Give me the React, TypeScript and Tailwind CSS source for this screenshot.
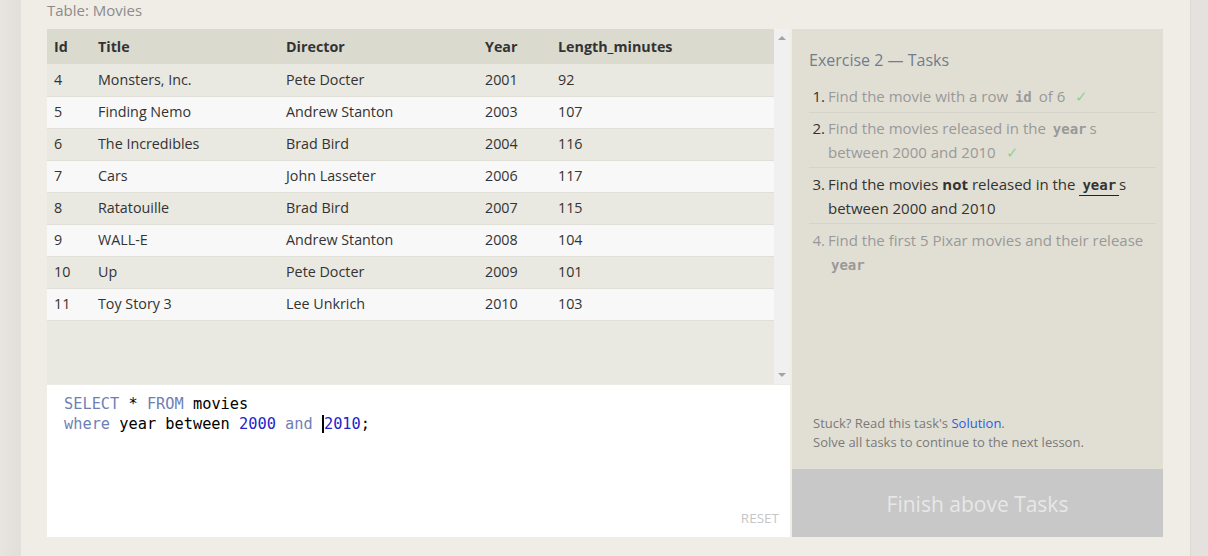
import React from 'react';

const rows = [
    { id: 4, title: 'Monsters, Inc.', director: 'Pete Docter', year: 2001, length: 92 },
    { id: 5, title: 'Finding Nemo', director: 'Andrew Stanton', year: 2003, length: 107 },
    { id: 6, title: 'The Incredibles', director: 'Brad Bird', year: 2004, length: 116 },
    { id: 7, title: 'Cars', director: 'John Lasseter', year: 2006, length: 117 },
    { id: 8, title: 'Ratatouille', director: 'Brad Bird', year: 2007, length: 115 },
    { id: 9, title: 'WALL-E', director: 'Andrew Stanton', year: 2008, length: 104 },
    { id: 10, title: 'Up', director: 'Pete Docter', year: 2009, length: 101 },
    { id: 11, title: 'Toy Story 3', director: 'Lee Unkrich', year: 2010, length: 103 },
];

const sans = "font-['Open_Sans',sans-serif]";
const mono = "font-['DejaVu_Sans_Mono',monospace]";

const Code = ({ children, underline }: { children: React.ReactNode; underline?: boolean }) => (
    <code className={`${mono} font-bold text-[14px] leading-[1] px-[3px] ${underline ? 'border-b-[1.5px] border-[#222] pb-[2px]' : ''}`}>
        {children}
    </code>
);

const Check = () => <span className="ml-[10px] text-[#92d092]">✓</span>;

const App = () => {
    return (
        <div className={`flex h-[556px] w-[1208px] bg-[#efede6] ${sans}`}>
            <div className="w-[21px] bg-gradient-to-r from-[#e8e5e1] to-[#e2dfdb]" />
            <div className="flex-1 pl-[26px] pr-[27px] flex flex-col">
                <div className="h-[29px] text-[15px] text-[#8c8c8c] leading-[20px]">Table: Movies</div>
                <div className="flex gap-[2px] h-[508px]">
                    {/* left column */}
                    <div className="w-[743px] flex flex-col">
                        <div className="flex h-[355px]">
                            <div className="w-[727px] bg-[#e9e8e1]">
                                <table className="w-full border-collapse text-[14.3px] text-[#333]">
                                    <thead>
                                        <tr className="h-[35px] bg-[#dbdacf] font-bold text-left">
                                            <th className="pl-[7px] w-[51px]">Id</th>
                                            <th className="w-[188px]">Title</th>
                                            <th className="w-[199px]">Director</th>
                                            <th className="w-[73px]">Year</th>
                                            <th>Length_minutes</th>
                                        </tr>
                                    </thead>
                                    <tbody>
                                        {rows.map((r, i) => (
                                            <tr
                                                key={r.id}
                                                className={`h-[32px] border-b border-[#e0dfd8] ${i % 2 === 0 ? 'bg-[#e9e8e1]' : 'bg-[#f8f8f8]'}`}>
                                                <td className="pl-[7px]">{r.id}</td>
                                                <td>{r.title}</td>
                                                <td>{r.director}</td>
                                                <td>{r.year}</td>
                                                <td>{r.length}</td>
                                            </tr>
                                        ))}
                                    </tbody>
                                </table>
                            </div>
                            <div className="w-[16px] bg-[#f0f0f0] flex flex-col justify-between items-center py-[7px]">
                                <div className="w-0 h-0 border-x-[4px] border-x-transparent border-b-[4px] border-b-[#a3a3a3]" />
                                <div className="w-0 h-0 border-x-[4px] border-x-transparent border-t-[4px] border-t-[#a3a3a3]" />
                            </div>
                        </div>
                        <div className="flex-1 bg-white border-t border-[#ecebe6] relative px-[17px] pt-[9px]">
                            <pre className={`${mono} text-[15.3px] leading-[20px] text-black`}>
                                <span className="text-[#6f7fb5]">SELECT</span> * <span className="text-[#6f7fb5]">FROM</span> movies{'\n'}
                                <span className="text-[#6f7fb5]">where</span> year between <span className="text-[#2323c8]">2000</span>{' '}
                                <span className="text-[#6f7fb5]">and</span>{' '}
                                <span className="border-l-2 border-black text-[#2323c8]">2010</span>;
                            </pre>
                            <span className="absolute right-[11px] bottom-[9px] text-[13.5px] text-[#c6c6c6]">RESET</span>
                        </div>
                    </div>
                    {/* right column */}
                    <div className="w-[371px] bg-[#e1dfd4] flex flex-col">
                        <div className="flex-1 pl-[17px] pr-[7px] pt-[20px] flex flex-col">
                            <h2 className="text-[16px] text-[#717d8c] leading-[22px]">Exercise 2 — Tasks</h2>
                            <ol className="mt-[13px] text-[15px] leading-[24px]">
                                <li className="flex text-[#999] pb-[4px] border-b border-[#d6d4ca]">
                                    <span className="w-[19px] text-right pr-[3px] text-[#333]">1.</span>
                                    <span>
                                        Find the movie with a row <Code>id</Code> of 6<Check />
                                    </span>
                                </li>
                                <li className="flex text-[#999] pt-[3px] pb-[3px] border-b border-[#d6d4ca]">
                                    <span className="w-[19px] text-right pr-[3px] text-[#333]">2.</span>
                                    <span className="flex-1">
                                        Find the movies released in the <Code>year</Code>s between 2000 and 2010<Check />
                                    </span>
                                </li>
                                <li className="flex text-[#333] pt-[4px] pb-[3px] border-b border-[#d6d4ca]">
                                    <span className="w-[19px] text-right pr-[3px]">3.</span>
                                    <span className="flex-1">
                                        Find the movies <b>not</b> released in the <Code underline>year</Code>s between 2000 and 2010
                                    </span>
                                </li>
                                <li className="flex text-[#999] pt-[4px]">
                                    <span className="w-[19px] text-right pr-[3px]">4.</span>
                                    <span className="flex-1">
                                        Find the first 5 Pixar movies and their release <Code>year</Code>
                                    </span>
                                </li>
                            </ol>
                            <div className="mt-auto mb-[17px] pl-[4px] text-[13px] leading-[19px] text-[#7a7a7a]">
                                <p>
                                    Stuck? Read this task's <span className="text-[#2b5be8]">Solution</span>.
                                </p>
                                <p>Solve all tasks to continue to the next lesson.</p>
                            </div>
                        </div>
                        <div className="h-[68px] pt-[3px] bg-[#c8c8c8] flex items-center justify-center text-[21px] text-[#e7e7e7]">
                            Finish above Tasks
                        </div>
                    </div>
                </div>
            </div>
            <div className="w-[18px] bg-[#e5e1de] border-l border-[#dcd8d4]" />
        </div>
    );
};

export default App;
